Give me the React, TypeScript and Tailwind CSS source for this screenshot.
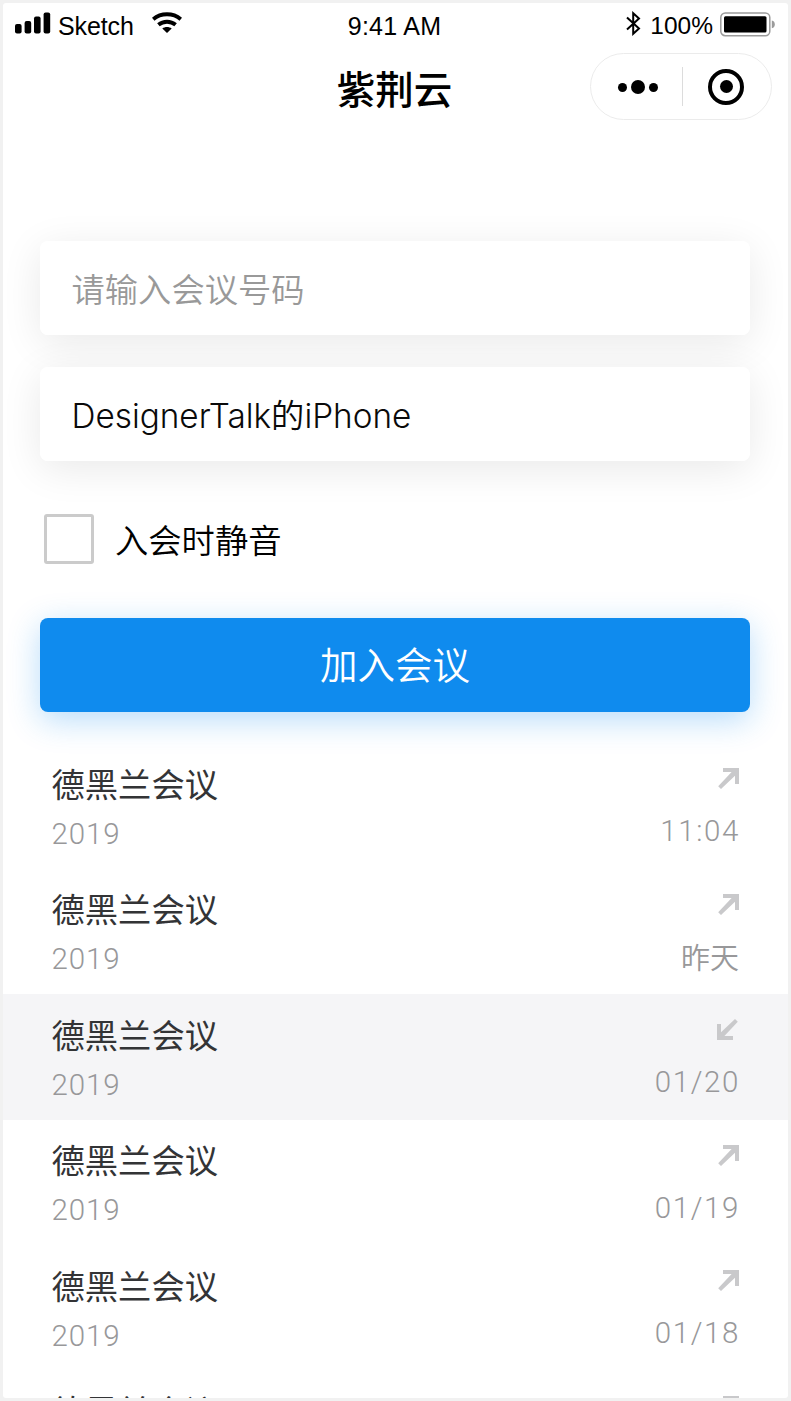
import React from "react";

type Call = { title: string; id: string; time: string; incoming?: boolean };

const calls: Call[] = [
  { title: "德黑兰会议", id: "2019", time: "11:04" },
  { title: "德黑兰会议", id: "2019", time: "昨天" },
  { title: "德黑兰会议", id: "2019", time: "01/20", incoming: true },
  { title: "德黑兰会议", id: "2019", time: "01/19" },
  { title: "德黑兰会议", id: "2019", time: "01/18" },
  { title: "德黑兰会议", id: "2019", time: "" },
];

function Signal() {
  return (
    <svg width="36" height="22" viewBox="0 0 36 22" className="mb-[7px] shrink-0">
      <rect x="0" y="12" width="6.6" height="9.5" rx="2" />
      <rect x="9.6" y="9" width="6.6" height="12.5" rx="2" />
      <rect x="19" y="4.6" width="6.6" height="16.9" rx="2" />
      <rect x="28.6" y="0.6" width="6.6" height="20.9" rx="2" />
    </svg>
  );
}

function Wifi() {
  return (
    <svg width="30" height="22" viewBox="0 0 30 22" className="mb-[8px] ml-[18px] shrink-0" fill="none" stroke="#000" strokeWidth="3.9">
      <path d="M1.2 7.2C9 0.6 21 0.6 28.8 7.2" />
      <path d="M6.4 12.8C11.4 8.7 18.6 8.7 23.6 12.8" />
      <path d="M15 21L10.3 16.6C13 14.6 17 14.6 19.7 16.6Z" fill="#000" stroke="none" />
    </svg>
  );
}

function Bluetooth() {
  return (
    <svg width="15" height="25" viewBox="0 0 15 25" className="mb-[7px] shrink-0" fill="none" stroke="#000" strokeWidth="2">
      <path d="M1 6.4L13 17.6L7.2 22.8V2.2L13 7.4L1 18.6" />
    </svg>
  );
}

function Battery() {
  return (
    <svg width="56" height="25" viewBox="0 0 56 25" className="mb-[4px] shrink-0">
      <rect x="0.8" y="0.9" width="49" height="22.8" rx="4.5" fill="none" stroke="#9b9b9b" strokeWidth="1.5" />
      <rect x="4" y="4.2" width="42.5" height="16.3" rx="1.5" />
      <path d="M51.8 8.6Q54.8 9.4 54.8 12.4T51.8 16.2Z" fill="#9b9b9b" />
    </svg>
  );
}

function Arrow({ incoming }: { incoming?: boolean }) {
  return (
    <svg
      width="21"
      height="21"
      viewBox="0 0 21 21"
      className={incoming ? "mr-[1px] rotate-180" : ""}
      fill="#c9c9cb"
    >
      <path d="M5 0H21V16H17V7.8L3 21L0.2 18.2L13.6 4H5Z" />
    </svg>
  );
}

function Field({ children }: { children: React.ReactNode }) {
  return (
    <div className="relative flex h-[94px] items-center rounded-lg bg-white pr-8 pl-[31.5px] pt-[5px] before:absolute before:inset-0 before:-z-10 before:rounded-lg before:shadow-[0_8px_40px_rgba(0,0,0,0.09)]">
      {children}
    </div>
  );
}

export default function App() {
  return (
    <div className="h-[1401px] w-[791px] bg-[#f1f1f1] p-[3px] font-['Inter','Noto_Sans_CJK_SC',sans-serif]">
      <div className="flex h-full flex-col overflow-hidden rounded-[3px] bg-white text-black">
        <div className="grid h-[47px] shrink-0 grid-cols-3 items-center pr-[12px] pl-[12px] font-['Liberation_Sans',sans-serif] text-[25px]">
          <div className="flex items-center">
            <Signal />
            <span className="ml-[7px] tracking-[-0.1px]">Sketch</span>
            <Wifi />
          </div>
          <div className="pr-[2px] text-center tracking-[0.25px]">9:41 AM</div>
          <div className="flex items-center justify-end">
            <Bluetooth />
            <span className="mr-[7px] ml-[9px] text-[24.5px]">100%</span>
            <Battery />
          </div>
        </div>

        <div className="grid h-[73px] shrink-0 grid-cols-[1fr_auto_1fr] items-center">
          <div />
          <h1 className="mt-[7px] mr-[2px] text-[38.5px] leading-none font-medium">紫荆云</h1>
          <div className="mr-4 flex h-[67px] w-[182px] items-center justify-self-end rounded-full border border-[#ebebeb]">
            <div className="flex flex-1 items-center justify-center gap-1 pl-[3px] pt-px">
              <i className="size-[9px] rounded-full bg-black" />
              <i className="size-[14px] rounded-full bg-black" />
              <i className="size-[9px] rounded-full bg-black" />
            </div>
            <div className="h-[39px] w-px bg-[#dcdcdc]" />
            <div className="flex flex-1 items-center justify-center pr-px">
              <div className="flex size-[36px] items-center justify-center rounded-full border-4 border-black">
                <i className="size-[13px] rounded-full bg-black" />
              </div>
            </div>
          </div>
        </div>

        <div className="isolate mr-[38px] ml-[37px] mt-[118px] flex shrink-0 flex-col gap-8">
          <Field>
            <span className="text-[33.3px] font-[350] text-[#999]">请输入会议号码</span>
          </Field>
          <Field>
            <span className="text-[33.3px] font-[350] text-[#0a0a0a]">DesignerTalk的iPhone</span>
          </Field>
        </div>

        <label className="mt-[53px] ml-[41px] flex h-[50px] shrink-0 items-center gap-[21px]">
          <span className="size-[50px] rounded-[3px] border-3 border-[#cbcbcb]" />
          <span className="pt-[5px] text-[33.3px] font-[350]">入会时静音</span>
        </label>

        <button className="mr-[38px] ml-[37px] mt-[54px] flex h-[94px] shrink-0 items-center justify-center rounded-lg bg-[#0f8bee] pt-[3px] text-[37.5px] font-[350] text-white shadow-[0_8px_32px_rgba(15,139,238,0.3)]">
          加入会议
        </button>

        <ul className="mt-[31px] flex shrink-0 flex-col">
          {calls.map((c, i) => (
            <li
              key={i}
              className={`flex h-[125.5px] justify-between pr-[49px] pl-[48.5px] ${c.incoming ? "bg-[#f5f5f7]" : ""}`}
            >
              <div className="pt-[16.5px]">
                <div className="h-[50px] text-[33.3px] leading-[50px] text-[#333436]">{c.title}</div>
                <div className="h-[48px] font-['Roboto',sans-serif] text-[29.5px] leading-[48px] font-[350] tracking-[0.9px] text-[#98989a]">{c.id}</div>
              </div>
              <div className="flex flex-col items-end pt-[25px]">
                <Arrow incoming={c.incoming} />
                {c.time === "昨天" ? (
                  <div className="mt-[20px] h-[48px] text-[29px] leading-[48px] font-[350] text-[#98989a]">{c.time}</div>
                ) : (
                  <div className="mt-[18px] -mr-px h-[48px] font-['Roboto',sans-serif] text-[29.5px] leading-[48px] font-[350] tracking-[1.6px] text-[#98989a]">{c.time}</div>
                )}
              </div>
            </li>
          ))}
        </ul>
      </div>
    </div>
  );
}
